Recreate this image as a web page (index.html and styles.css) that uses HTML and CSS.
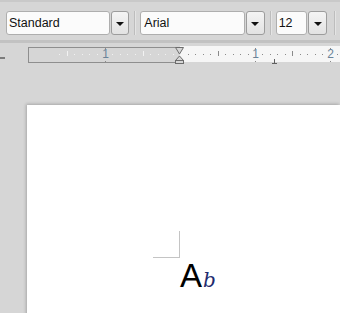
FILE: index.html
```html
<!DOCTYPE html>
<html lang="en">
<head>
  <meta charset="UTF-8">
  <title>Writer</title>
  <link rel="stylesheet" href="styles.css">
</head>
<body>

  <div id="toolbar">
    <div class="combo combo-style">Standard</div>
    <div class="drop-btn"><span class="arrow"></span></div>
    <span class="separator"></span>
    <div class="combo combo-font">Arial</div>
    <div class="drop-btn"><span class="arrow"></span></div>
    <span class="separator"></span>
    <div class="combo combo-size">12</div>
    <div class="drop-btn"><span class="arrow"></span></div>
    <span class="separator"></span>
  </div>

  <div id="ruler-area">
    <span class="vruler-dash"></span>
    <div id="ruler">
      <div class="ruler-margin"></div>
      <div class="ruler-body"></div>
      <svg class="indent-marker" width="10" height="17" viewBox="0 0 10 17">
        <path d="M0.5 0.5 H8.5 L4.5 7 Z" fill="#d6d6d6" stroke="#6c6c6c" />
        <path d="M4.5 9 L0.5 13.5 H8.5 Z" fill="#d6d6d6" stroke="#6c6c6c" />
        <rect x="0.5" y="13.5" width="8" height="3" fill="#d6d6d6" stroke="#6c6c6c" />
      </svg>
      <span class="tab-stop"></span>
    </div>
  </div>

  <div id="workspace">
    <div class="page">
      <div class="text-corner"></div>
      <div class="cursor-sample">A<span class="cursor-b">b</span></div>
    </div>
  </div>

  <script>
    const ruler = document.getElementById('ruler');
    const origin = 152.5; // left margin, measured from the ruler's left edge

    function addMark(x, k, inMargin) {
      const mark = document.createElement('span');
      if (k % 10 === 0) {
        mark.className = 'ruler-num';
        mark.textContent = Math.abs(k / 10);
      } else if (k % 5 === 0) {
        mark.className = 'ruler-tick' + (inMargin ? ' on-margin' : '');
      } else {
        mark.className = 'ruler-dot' + (inMargin ? ' on-margin' : '');
      }
      mark.style.left = Math.round(x) + 'px';
      ruler.appendChild(mark);
    }

    for (let k = -16; k < 0; k++) addMark(origin + k * 7.6, k, true);
    for (let k = 1; k <= 21; k++) addMark(origin + k * 7.45, k, false);
  </script>

</body>
</html>
```

FILE: styles.css
```css
* {
  margin: 0;
  padding: 0;
  box-sizing: border-box;
}

body {
  width: 340px;
  height: 313px;
  overflow: hidden;
  background: #d6d6d6;
  font-family: 'Liberation Sans', Arial, sans-serif;
}

#toolbar {
  display: flex;
  align-items: center;
  height: 43px;
  padding: 9px 0 5px 6px;
  background: #d6d6d6;
  border-top: 2px solid #c9c9c9;
  border-bottom: 3px solid #c2c2c2;
}

.combo {
  height: 24px;
  padding-left: 2px;
  line-height: 22px;
  font-size: 12.5px;
  color: #111;
  background: #fbfbfb;
  border: 1px solid #aeaeae;
  border-radius: 3px;
}

.combo-style {
  width: 105px;
}

.combo-font {
  width: 106px;
  padding-left: 3px;
}

.combo-size {
  width: 32px;
  padding-left: 2px;
}

.drop-btn {
  width: 19px;
  height: 24px;
  margin-left: 1px;
  display: flex;
  align-items: center;
  justify-content: center;
  background: linear-gradient(#f4f4f4, #e2e2e2);
  border: 1px solid #9c9c9c;
  border-radius: 3px;
}

.arrow {
  width: 0;
  height: 0;
  border-left: 4px solid transparent;
  border-right: 4px solid transparent;
  border-top: 4px solid #111;
  margin-top: 1px;
}

.separator {
  width: 2px;
  height: 24px;
  margin: 0 4px 0 5px;
  border-left: 1px solid #bdbdbd;
  border-right: 1px solid #e4e4e4;
}

.combo-size + .drop-btn + .separator {
  margin-left: 7px;
}

#ruler-area {
  position: relative;
  height: 62px;
  padding: 4px 0 0 28px;
}

.vruler-dash {
  position: absolute;
  left: 0;
  top: 14px;
  width: 5px;
  height: 2px;
  background: #7c7c7c;
}

#ruler {
  position: relative;
  display: flex;
  height: 16px;
}

.ruler-margin {
  width: 152px;
  border: 1px solid #8e8e8e;
  border-right: none;
  background: #d6d6d6;
}

.ruler-body {
  flex-grow: 1;
  margin-top: -1px;
  height: 16px;
  background: #f6f6f6;
}

.ruler-dot,
.ruler-tick {
  position: absolute;
  width: 1px;
  background: #8a8a8a;
}

.ruler-dot {
  top: 7px;
  height: 1px;
}

.ruler-tick {
  top: 4px;
  height: 5px;
}

.on-margin {
  background: #f2f2f2;
}

.ruler-num {
  position: absolute;
  top: 1px;
  width: 7px;
  margin-left: -3px;
  font-size: 12px;
  line-height: 12px;
  text-align: center;
  color: #6a8399;
}

.ruler-num::before,
.ruler-num::after {
  content: "";
  position: absolute;
  left: 3px;
  width: 1px;
  height: 1px;
  background: #8a8a8a;
}

.ruler-num::before {
  top: 0;
}

.ruler-num::after {
  top: 13px;
}

.indent-marker {
  position: absolute;
  left: 147px;
  top: 0;
}

.tab-stop {
  position: absolute;
  left: 244px;
  top: 12px;
  width: 5px;
  height: 5px;
  border-bottom: 1px solid #606060;
}

.tab-stop::before {
  content: "";
  position: absolute;
  left: 2px;
  top: 0;
  width: 1px;
  height: 4px;
  background: #606060;
}

#workspace {
  padding-left: 27px;
}

.page {
  height: 220px;
  padding: 126px 0 0 126px;
  background: #fff;
  box-shadow: -1px -1px 3px rgba(0, 0, 0, 0.22);
}

.text-corner {
  width: 27px;
  height: 27px;
  border-right: 1px solid #c4c4c4;
  border-bottom: 1px solid #c4c4c4;
}

.cursor-sample {
  margin: 1px 0 0 27px;
  font-size: 33px;
  line-height: 33px;
  color: #000;
}

.cursor-b {
  margin-left: 1px;
  font-family: 'DejaVu Serif', serif;
  font-style: italic;
  font-size: 20px;
  line-height: 20px;
  color: #1e2b6e;
}
```
